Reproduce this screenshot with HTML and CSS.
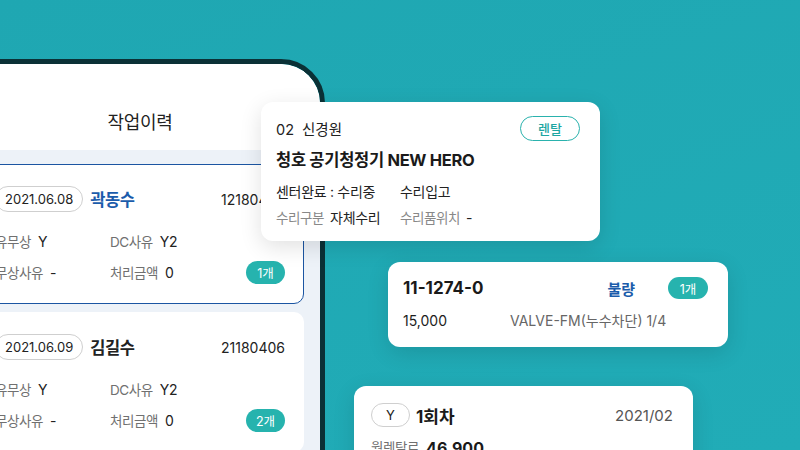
FILE: index.html
```html
<!DOCTYPE html>
<html lang="ko">
<head>
    <meta charset="UTF-8">
    <meta name="viewport" content="width=device-width, initial-scale=1.0">
    <title>작업이력</title>
    <link rel="stylesheet" href="styles.css">
</head>
<body>
    <div class="stage">
        <!-- Phone mockup -->
        <div class="phone">
            <div class="screen">
                <header class="screen-head">작업이력</header>
                <div class="job-list">
                    <article class="job-card job-card--active">
                        <div class="job-top">
                            <span class="date-pill">2021.06.08</span>
                            <span class="job-name">곽동수</span>
                            <span class="job-no">12180406</span>
                        </div>
                        <div class="job-info">
                            <div class="info"><span class="label">유무상</span><span class="value">Y</span></div>
                            <div class="info"><span class="label">DC사유</span><span class="value">Y2</span></div>
                            <span></span>
                            <div class="info"><span class="label">무상사유</span><span class="value">-</span></div>
                            <div class="info"><span class="label">처리금액</span><span class="value">0</span></div>
                            <span class="count-badge">1개</span>
                        </div>
                    </article>
                    <article class="job-card">
                        <div class="job-top">
                            <span class="date-pill">2021.06.09</span>
                            <span class="job-name">김길수</span>
                            <span class="job-no">21180406</span>
                        </div>
                        <div class="job-info">
                            <div class="info"><span class="label">유무상</span><span class="value">Y</span></div>
                            <div class="info"><span class="label">DC사유</span><span class="value">Y2</span></div>
                            <span></span>
                            <div class="info"><span class="label">무상사유</span><span class="value">-</span></div>
                            <div class="info"><span class="label">처리금액</span><span class="value">0</span></div>
                            <span class="count-badge">2개</span>
                        </div>
                    </article>
                </div>
            </div>
        </div>

        <!-- Floating cards -->
        <section class="float-card repair-card">
            <div class="repair-top">
                <span class="repair-who"><span class="repair-num">02</span>신경원</span>
                <span class="outline-pill outline-pill--teal">렌탈</span>
            </div>
            <h2 class="repair-title">청호 공기청정기 NEW HERO</h2>
            <div class="repair-grid">
                <span class="value">센터완료 : 수리중</span>
                <span class="value">수리입고</span>
                <div class="info"><span class="label">수리구분</span><span class="value">자체수리</span></div>
                <div class="info"><span class="label">수리품위치</span><span class="value">-</span></div>
            </div>
        </section>

        <section class="float-card part-card">
            <div class="part-top">
                <span class="part-code">11-1274-0</span>
                <span class="part-state">불량</span>
                <span class="count-badge">1개</span>
            </div>
            <div class="part-bottom">
                <span class="part-price">15,000</span>
                <span class="part-name">VALVE-FM(누수차단) 1/4</span>
            </div>
        </section>

        <section class="float-card rent-card">
            <div class="rent-top">
                <span class="outline-pill">Y</span>
                <span class="rent-round">1회차</span>
                <span class="rent-date">2021/02</span>
            </div>
            <div class="rent-bottom">
                <span class="label">월렌탈료</span>
                <span class="rent-fee">46,900</span>
            </div>
        </section>
    </div>
</body>
</html>
```

FILE: styles.css
```css
* {
    box-sizing: border-box;
    margin: 0;
    padding: 0;
}

body {
    width: 800px;
    height: 450px;
    overflow: hidden;
    background: linear-gradient(160deg, #1fa7b2, #21acb7);
    font-family: 'Inter', 'Noto Sans CJK KR', sans-serif;
    color: #1d1d1d;
}

.stage {
    position: relative;
    width: 800px;
    height: 450px;
}

/* Phone */
.phone {
    position: absolute;
    left: -45px;
    top: 59px;
    width: 370px;
    height: 430px;
    border: 5px solid #0b3136;
    border-radius: 0 44px 0 0;
    overflow: hidden;
}

.screen {
    height: 100%;
    background: #edf2f8;
    border-radius: 0 39px 0 0;
    overflow: hidden;
}

.screen-head {
    height: 86px;
    padding-top: 47px;
    background: #fff;
    text-align: center;
    font-size: 18px;
    line-height: 24px;
    letter-spacing: -0.3px;
    color: #222;
}

.job-list {
    display: flex;
    flex-direction: column;
    gap: 8px;
    padding: 14px 16px;
}

.job-card {
    background: #fff;
    border: 1px solid transparent;
    border-radius: 10px;
    padding: 21px 18px 19px;
}

.job-card--active {
    border-color: #1b55a2;
}

.job-top {
    display: flex;
    align-items: center;
    height: 26px;
}

.date-pill {
    display: inline-flex;
    align-items: center;
    height: 26px;
    padding: 0 9px;
    border: 1px solid #cfcfcf;
    border-radius: 13px;
    font-size: 13px;
    color: #222;
}

.job-name {
    margin-left: 7px;
    font-size: 16.5px;
    font-weight: 600;
    letter-spacing: -0.4px;
    color: #222;
}

.job-card--active .job-name {
    color: #1b5cab;
}

.job-no {
    margin-left: auto;
    font-size: 14px;
    color: #222;
}

.job-info {
    display: grid;
    grid-template-columns: 115px 1fr auto;
    align-items: center;
    row-gap: 8px;
    margin-top: 19px;
}

.info {
    display: flex;
    align-items: center;
    gap: 7px;
    line-height: 22px;
}

.label {
    font-size: 13.5px;
    letter-spacing: -0.4px;
    color: #707070;
}

.value {
    font-size: 14px;
    letter-spacing: -0.3px;
    color: #222;
}

.count-badge {
    display: inline-flex;
    align-items: center;
    justify-content: center;
    height: 23px;
    min-width: 39px;
    padding: 0 9px;
    border-radius: 12px;
    background: #26b3ae;
    color: #fff;
    font-size: 12.5px;
}

/* Floating cards */
.float-card {
    position: absolute;
    background: #fff;
    border-radius: 12px;
    box-shadow: 0 6px 22px rgba(0, 0, 0, 0.12);
}

.repair-card {
    left: 261px;
    top: 102px;
    width: 339px;
    padding: 14px 20px 12px 15px;
}

.repair-top {
    display: flex;
    align-items: center;
    justify-content: space-between;
    height: 25px;
}

.repair-who {
    font-size: 14.5px;
    color: #222;
}

.repair-num {
    margin-right: 8px;
}

.outline-pill {
    display: inline-flex;
    align-items: center;
    justify-content: center;
    height: 25px;
    border: 1px solid #cfcfcf;
    border-radius: 13px;
    font-size: 13px;
    color: #222;
}

.outline-pill--teal {
    width: 60px;
    border-color: #2ab2ad;
    color: #1ea6a2;
    font-weight: 500;
}

.repair-title {
    margin-top: 9px;
    font-size: 16.5px;
    font-weight: 700;
    line-height: 20px;
    letter-spacing: -0.3px;
    color: #1a1a1a;
}

.repair-grid {
    display: grid;
    grid-template-columns: 124px auto;
    align-items: center;
    row-gap: 5px;
    margin-top: 11px;
    line-height: 21px;
}

.repair-grid .info {
    gap: 6px;
}

.repair-grid .label {
    font-size: 13.5px;
    color: #888;
}

.repair-grid .value {
    font-size: 14px;
}

.part-card {
    left: 388px;
    top: 262px;
    width: 340px;
    padding: 15px 20px 16px 15px;
}

.part-top {
    display: flex;
    align-items: center;
    height: 22px;
}

.part-code {
    font-size: 17px;
    font-weight: 700;
    color: #1a1a1a;
}

.part-state {
    margin-left: auto;
    margin-right: 33px;
    font-size: 15px;
    font-weight: 700;
    color: #1b5cab;
}

.part-card .count-badge {
    height: 22px;
    min-width: 40px;
}

.part-bottom {
    display: grid;
    grid-template-columns: 107px auto;
    margin-top: 12px;
    line-height: 20px;
    font-size: 14px;
}

.part-name {
    color: #666;
}

.rent-card {
    left: 354px;
    top: 386px;
    width: 339px;
    height: 90px;
    padding: 17px 20px 0 17px;
}

.rent-top {
    display: flex;
    align-items: center;
    height: 24px;
}

.rent-top .outline-pill {
    width: 39px;
    height: 24px;
}

.rent-round {
    margin-left: 6px;
    font-size: 17px;
    font-weight: 700;
    color: #1a1a1a;
}

.rent-date {
    margin-left: auto;
    font-size: 15px;
    color: #555;
}

.rent-bottom {
    display: flex;
    align-items: center;
    gap: 7px;
    margin-top: 10px;
    line-height: 22px;
}

.rent-bottom .label {
    font-size: 13.5px;
}

.rent-fee {
    font-size: 16px;
    font-weight: 700;
    color: #1a1a1a;
}
```
